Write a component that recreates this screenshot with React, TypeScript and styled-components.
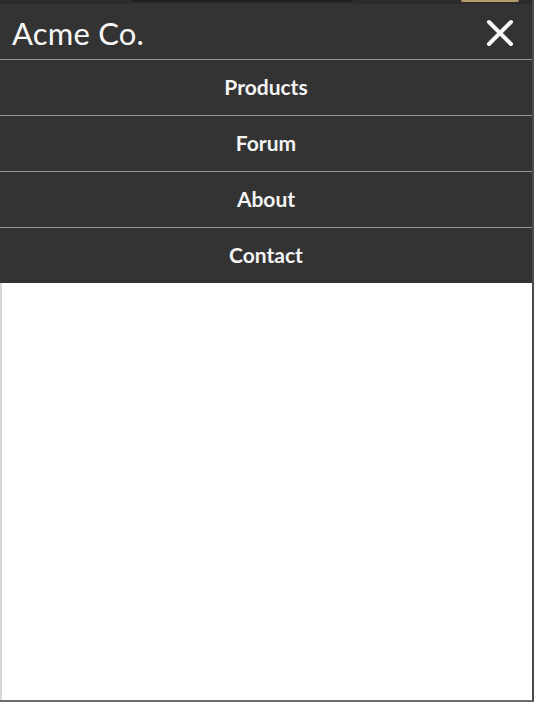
import React from "react";
import styled, { createGlobalStyle } from "styled-components";

const Global = createGlobalStyle`
  html, body { margin: 0; padding: 0; background: #ffffff; }
  body { font-family: Lato, "Open Sans", sans-serif; }
`;

const Frame = styled.div`
  width: 534px;
  height: 702px;
  box-sizing: border-box;
  display: flex;
  flex-direction: column;
  background: #ffffff;
  border-right: 2px solid #4a4a4a;
  border-bottom: 2px solid #6a6a6a;
  overflow: hidden;
`;

const Chrome = styled.div`
  height: 4px;
  background: #2c2c2c;
  display: flex;
  align-items: flex-start;
  padding-left: 133px;
`;

const ChromeBar = styled.div<{ $w: number; $c: string; $ml?: number }>`
  width: ${(p) => p.$w}px;
  height: 2px;
  margin-left: ${(p) => p.$ml ?? 0}px;
  background: ${(p) => p.$c};
  border-radius: 0 0 2px 2px;
`;

const Header = styled.header`
  height: 55px;
  background: #333333;
  display: flex;
  align-items: center;
  justify-content: space-between;
  padding: 0 17px 0 12px;
  border-bottom: 1px solid #909090;
`;

const Brand = styled.div`
  color: #f7f7f7;
  font-size: 31px;
  font-weight: 400;
  letter-spacing: 0.2px;
  margin-top: 2px;
`;

const CloseButton = styled.button`
  width: 30px;
  height: 30px;
  padding: 0;
  border: none;
  background: transparent;
  display: flex;
  align-items: center;
  justify-content: center;
  margin-top: 3px;
`;

const Nav = styled.nav`
  display: flex;
  flex-direction: column;
  background: #333333;
`;

const NavItem = styled.a<{ $last?: boolean }>`
  height: 55px;
  box-sizing: border-box;
  padding-bottom: 2px;
  display: flex;
  align-items: center;
  justify-content: center;
  color: #f4f4f4;
  font-size: 21px;
  font-weight: 700;
  text-decoration: none;
  border-bottom: ${(p) => (p.$last ? "none" : "1px solid #909090")};
  height: ${(p) => (p.$last ? 55 : 56)}px;
`;

const Content = styled.main`
  flex: 1;
  background: #ffffff;
  border-left: 2px solid #d4d6da;
`;

const items = ["Products", "Forum", "About", "Contact"];

export default function App() {
  return (
    <>
      <Global />
      <Frame>
        <Chrome>
          <ChromeBar $w={220} $c="#1e1e1e" />
          <ChromeBar $w={58} $c="#b39a6a" $ml={108} />
        </Chrome>
        <Header>
          <Brand>Acme Co.</Brand>
          <CloseButton aria-label="Close menu">
            <svg width="28" height="28" viewBox="0 0 28 28">
              <path
                d="M3 3 L25 25 M25 3 L3 25"
                stroke="#f7f7f7"
                strokeWidth="4"
                strokeLinecap="round"
              />
            </svg>
          </CloseButton>
        </Header>
        <Nav>
          {items.map((label, i) => (
            <NavItem key={label} href="#" $last={i === items.length - 1}>
              {label}
            </NavItem>
          ))}
        </Nav>
        <Content />
      </Frame>
    </>
  );
}
